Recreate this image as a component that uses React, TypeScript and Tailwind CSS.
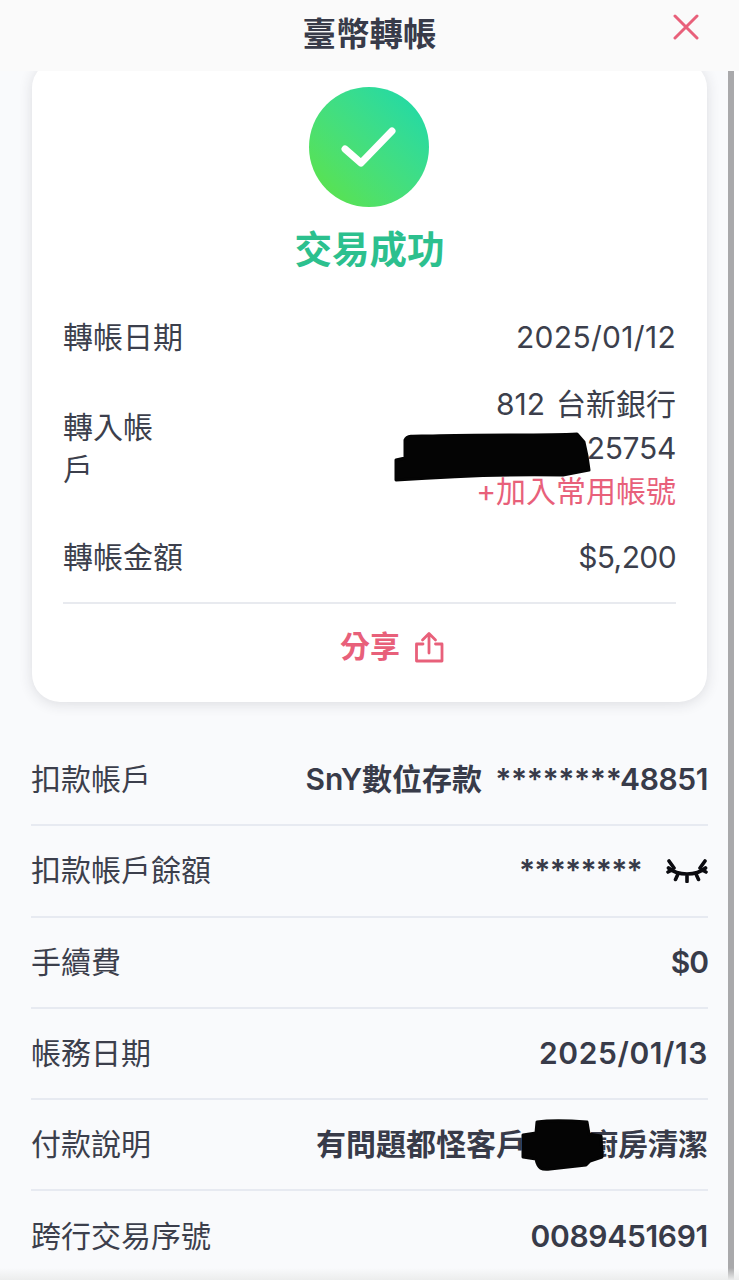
import * as React from "react";

const fontStack = "font-['Inter','Noto_Sans_CJK_TC',sans-serif]";

function CheckBadge() {
  return (
    <div className="w-[120px] h-[120px] mr-[2px] rounded-full bg-gradient-to-tr from-[#5fe33a] to-[#14d8ad] flex items-center justify-center">
      <svg width="56" height="44" viewBox="0 0 56 44" fill="none">
        <path d="M4 24 L20 38 L51 6" stroke="white" strokeWidth="7" strokeLinecap="round" strokeLinejoin="round" />
      </svg>
    </div>
  );
}

function ShareIcon() {
  return (
    <svg width="32" height="32" viewBox="0 0 32 32" fill="none" stroke="#e8607a" strokeWidth="2.8" strokeLinecap="round" strokeLinejoin="round">
      <path d="M10 13 H3.5 V30 H29 V13 H22.5" />
      <path d="M16 22 V3 M9.5 9 L16 2.5 L22.5 9" />
    </svg>
  );
}

function ClosedEye() {
  return (
    <svg width="42" height="24" viewBox="0 0 42 24" fill="none" stroke="#0b0b10" strokeWidth="3.6" strokeLinecap="round">
      <path d="M2.5 9 C12 17 30 17 39.5 9" />
      <path d="M3 2 L8 9 M39 2 L34 9 M2 13 L6 11 M40 13 L36 11 M12 15 L9.5 20.5 M30 15 L32.5 20.5 M21 17 V22.5" />
    </svg>
  );
}

function Scribble({ className, d, w, h }: { className: string; d: string; w: number; h: number }) {
  return (
    <svg className={`absolute ${className}`} width={w} height={h} viewBox={`0 0 ${w} ${h}`}>
      <path d={d} fill="#040404" stroke="#040404" strokeWidth="3" strokeLinejoin="round" />
    </svg>
  );
}

function Row({ label, children }: { label: string; children: React.ReactNode }) {
  return (
    <div className="h-[91.25px] flex items-center justify-between border-b-2 border-[#e7eaf1] text-[30px]">
      <span className="text-[#3c3f4c]">{label}</span>
      <div className="flex items-center font-semibold text-[#383b49]">{children}</div>
    </div>
  );
}

export default function App() {
  return (
    <div className={`${fontStack} relative w-[739px] h-[1280px] overflow-hidden bg-[#f9fafc] text-[#3c3f4c]`}>
      <header className="relative z-10 h-[71px] bg-[#fafafa] flex items-center justify-center">
        <h1 className="text-[33.5px] font-bold text-[#383b49] leading-none pb-[2px]">臺幣轉帳</h1>
        <svg className="absolute right-[40px] top-[14px]" width="26" height="26" viewBox="0 0 26 26" fill="none" stroke="#e8607a" strokeWidth="3" strokeLinecap="round">
          <path d="M2 2 L24 24 M24 2 L2 24" />
        </svg>
      </header>

      {/* scrolled content, card top is hidden behind the header */}
      <main className="mt-[-11px]">
        <section className="mx-[32px] w-[675px] h-[642px] bg-white rounded-[28px] shadow-[0_2px_14px_rgba(40,45,60,0.14)] px-[31px] pt-[27px]">
          <div className="flex flex-col items-center">
            <CheckBadge />
            <p className="mt-[16px] text-[37.5px] leading-[54px] font-bold text-[#2cc08e]">交易成功</p>
          </div>

          <div className="mt-[29px] text-[30px]">
            <div className="h-[62px] mb-[15px] flex items-center justify-between">
              <span>轉帳日期</span>
              <span className="tracking-[0.3px]">2025/01/12</span>
            </div>
            <div className="relative flex items-center justify-between">
              <span className="w-[100px] leading-[42px]">轉入帳戶</span>
              <div className="text-right leading-[43.5px]">
                <p>
                  812<span className="ml-[11px]">台新銀行</span>
                </p>
                <p className="tracking-[-0.3px]">25754</p>
                <p className="text-[#e8607a]">+加入常用帳號</p>
              </div>
              <Scribble
                className="left-[330px] top-[49px]"
                w={200}
                h={50}
                d="M12 8 C14 3 22 4 40 4 C90 2 150 4 184 2 L191 10 L194 24 L196 38 L170 43 C120 42 60 44 3 48 L3 28 L12 26 Z"
              />
            </div>
            <div className="h-[88px] flex items-center justify-between">
              <span>轉帳金額</span>
              <span className="tracking-[-0.6px]">$5,200</span>
            </div>
          </div>

          <div className="border-t-2 border-[#e8eaef] h-[88px] flex items-center justify-center gap-[13px] pl-[46px]">
            <span className="text-[30px] font-bold text-[#e8607a]">分享</span>
            <ShareIcon />
          </div>
        </section>

        <section className="mx-[31px] w-[677px] mt-[33px] relative">
          <Row label="扣款帳戶">
            <span>SnY數位存款</span>
            <span className="ml-[13px] tracking-[-0.4px]">********48851</span>
          </Row>
          <Row label="扣款帳戶餘額">
            <span className="tracking-[-0.8px]">********</span>
            <span className="ml-[24px]">
              <ClosedEye />
            </span>
          </Row>
          <Row label="手續費">
            <span className="tracking-[-1px]">$0</span>
          </Row>
          <Row label="帳務日期">
            <span className="tracking-[0.6px]">2025/01/13</span>
          </Row>
          <Row label="付款說明">
            <span>有問題都怪客戶</span>
            <span className="w-[62px]" />
            <span>廚房清潔</span>
          </Row>
          <div className="h-[91.25px] flex items-center justify-between text-[30px]">
            <span>跨行交易序號</span>
            <span className="font-semibold text-[#383b49] tracking-[-0.3px]">0089451691</span>
          </div>
          <Scribble
            className="left-[489px] top-[384px]"
            w={84}
            h={54}
            d="M17 3 C30 1 55 2 67 3 L69 15 L81 17 L82 38 L70 42 L66 46 L30 50 C22 51 18 50 16 40 L3 38 L3 16 L16 14 Z"
          />
        </section>
      </main>

      {/* scrollbar */}
      <div className="absolute top-[71px] right-0 bottom-0 w-[11px] bg-[#a9a9ab] border-r-[5px] border-white" />
      {/* bottom fade */}
      <div className="absolute left-0 right-0 bottom-0 h-[12px] bg-gradient-to-b from-transparent to-[#eceded]" />
    </div>
  );
}
